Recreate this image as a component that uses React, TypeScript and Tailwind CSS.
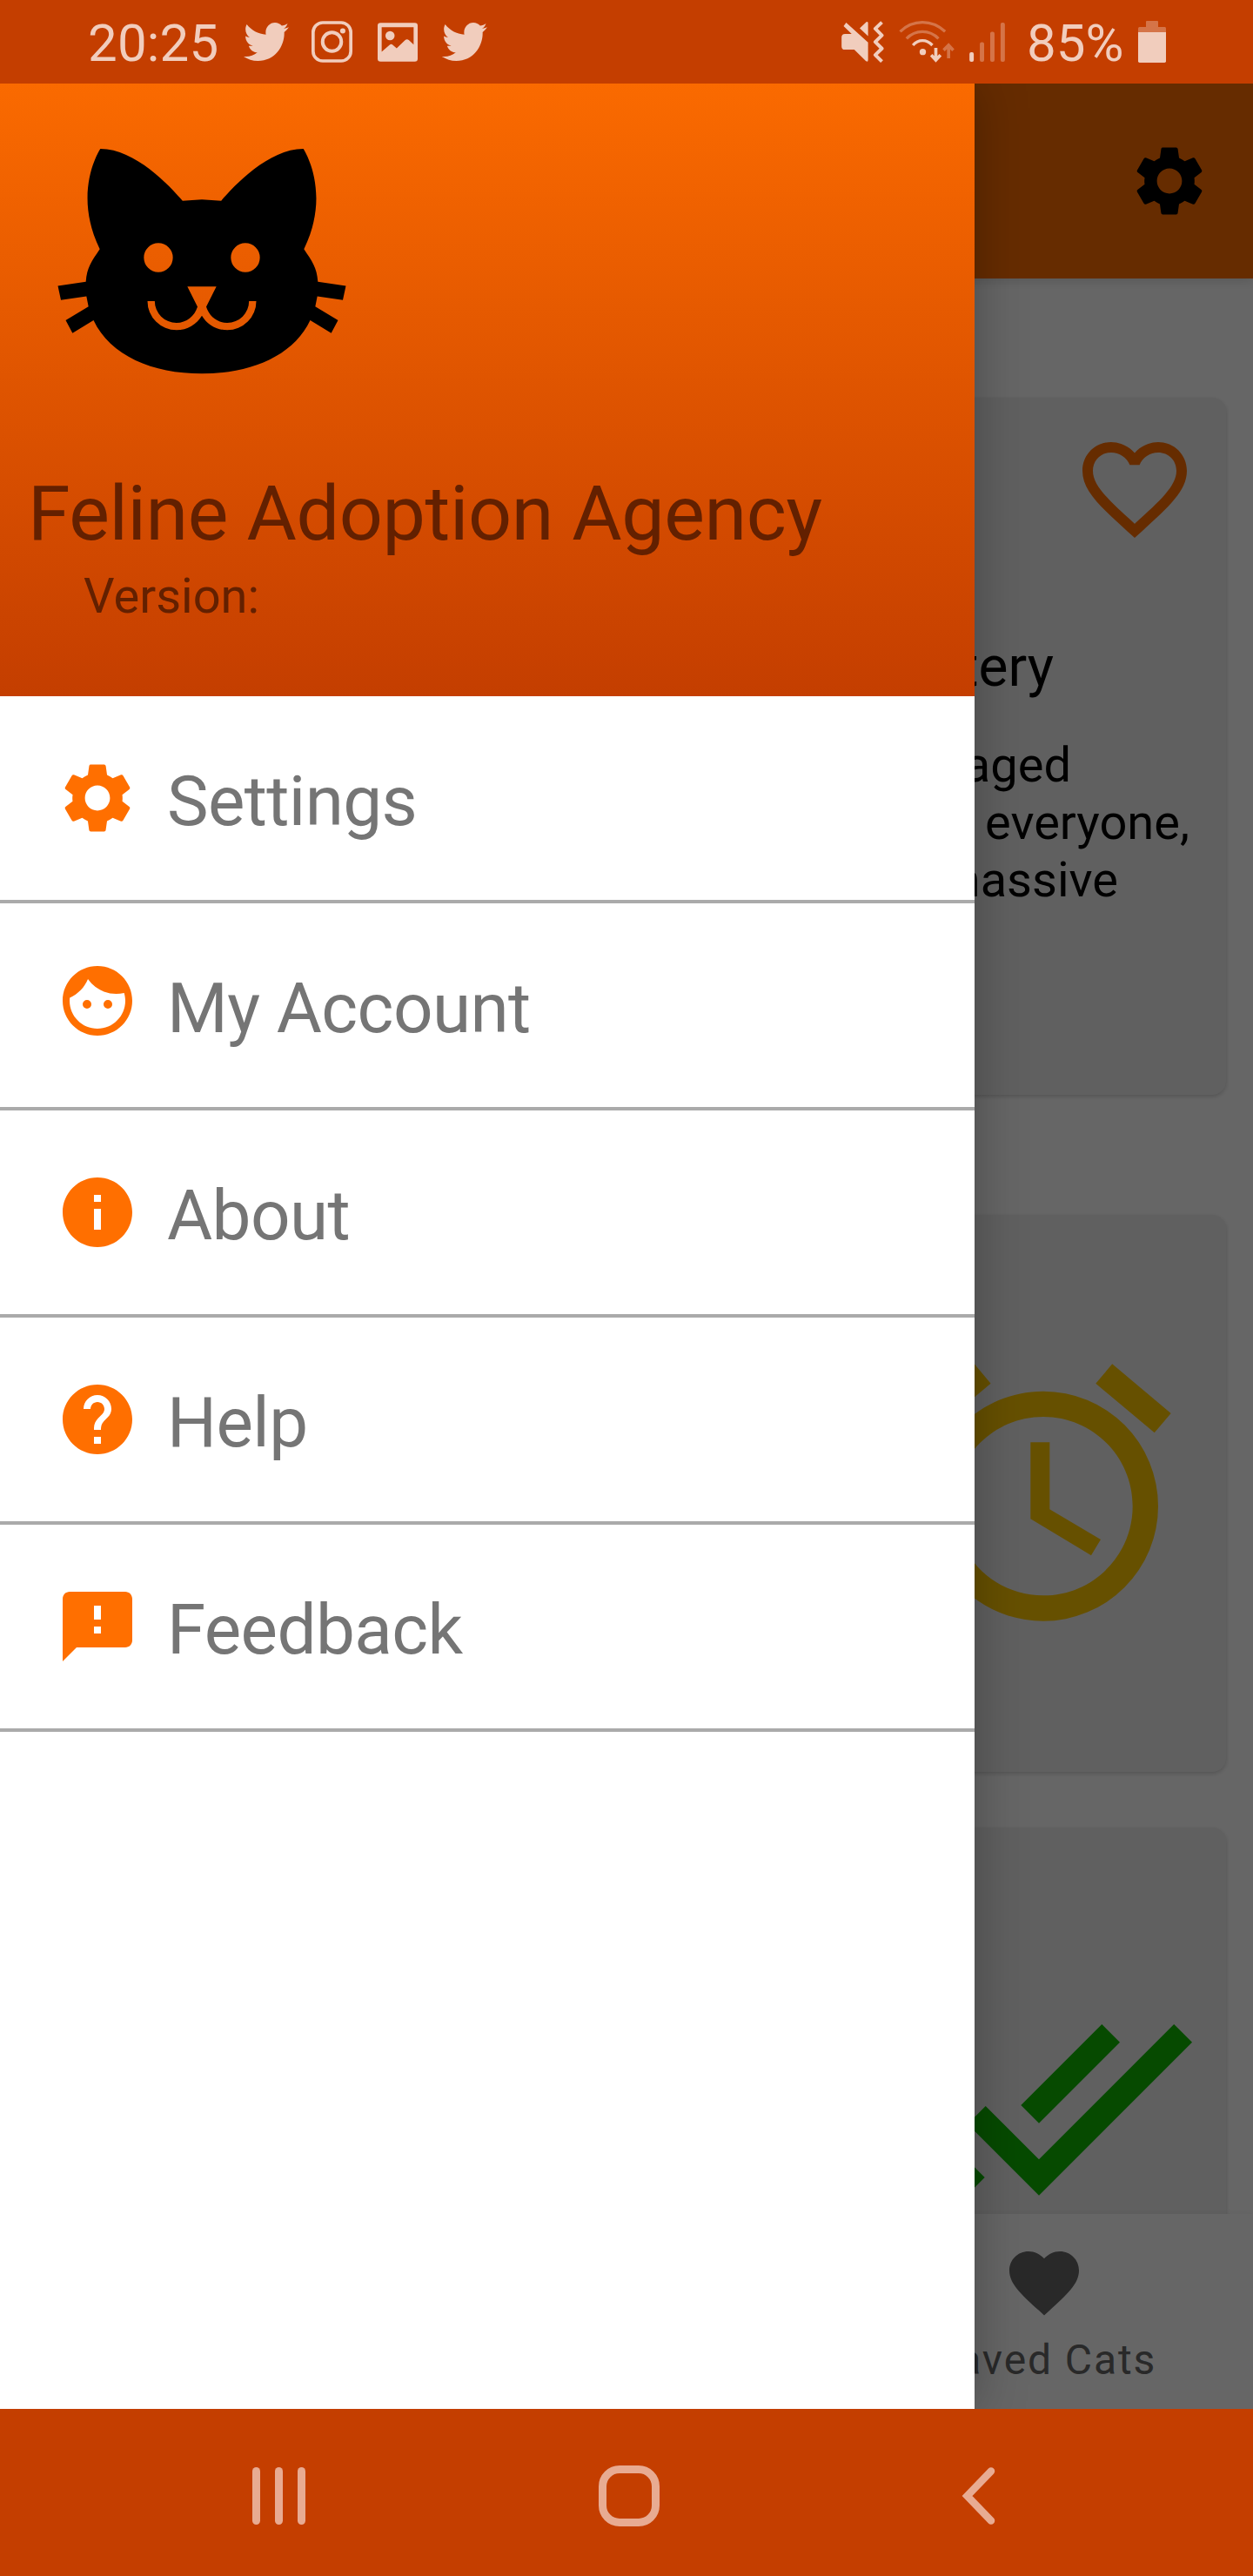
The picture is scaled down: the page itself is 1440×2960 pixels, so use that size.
import type { ReactNode } from "react";
import {
  MdAlarm,
  MdDoneAll,
  MdFace,
  MdFavorite,
  MdFavoriteBorder,
  MdFeedback,
  MdHelp,
  MdInfo,
  MdSettings,
} from "react-icons/md";
import { FaTwitter } from "react-icons/fa";

const CAT =
  "M12,8L10.67,8.09C9.81,7.07 7.4,4.5 5,4.5C5,4.5 3.03,7.46 4.96,11.41C4.41,12.24 4.07,12.67 4,13.66L2.07,13.95L2.28,14.93L4.04,14.67L4.18,15.38L2.61,16.32L3.08,17.21L4.53,16.32C5.68,18.76 8.59,20 12,20C15.41,20 18.32,18.76 19.47,16.32L20.92,17.21L21.39,16.32L19.82,15.38L19.96,14.67L21.72,14.93L21.93,13.95L20,13.66C19.93,12.67 19.59,12.24 19.04,11.41C20.97,7.46 19,4.5 19,4.5C16.6,4.5 14.19,7.07 13.33,8.09L12,8M9,11A1,1 0 0,1 10,12A1,1 0 0,1 9,13A1,1 0 0,1 8,12A1,1 0 0,1 9,11M15,11A1,1 0 0,1 16,12A1,1 0 0,1 15,13A1,1 0 0,1 14,12A1,1 0 0,1 15,11M11,14H13L12.3,15.39C12.5,16.03 13.06,16.5 13.75,16.5A1.5,1.5 0 0,0 15.25,15H15.75A2,2 0 0,1 13.75,17C13,17 12.35,16.59 12,16V16H12C11.65,16.59 11,17 10.25,17A2,2 0 0,1 8.25,15H8.75A1.5,1.5 0 0,0 10.25,16.5C10.94,16.5 11.5,16.03 11.7,15.39L11,14Z";

function Twitter() {
  return <FaTwitter preserveAspectRatio="none" className="h-[54px] w-[52px] shrink-0" />;
}

function Instagram() {
  return (
    <svg viewBox="0 0 140 142" className="ml-[26px] h-[48px] w-[47px] shrink-0" fill="none" stroke="currentColor">
      <rect x="5.5" y="5.5" width="129" height="131" rx="33" strokeWidth="11" />
      <circle cx="70" cy="71" r="32" strokeWidth="12" />
      <circle cx="107" cy="34" r="9" fill="currentColor" stroke="none" />
    </svg>
  );
}

function Picture() {
  return (
    <svg viewBox="0 0 139 135" className="mr-[28px] ml-[29px] h-[45px] w-[46px] shrink-0" fill="currentColor">
      <path
        fillRule="evenodd"
        d="M10 0H129Q139 0 139 10V125Q139 135 129 135H10Q0 135 0 125V10Q0 0 10 0ZM14 15V101L41 77Q47 72 53 77L66 89L95 61Q102 55 109 61L125 76V15Z"
      />
      <circle cx="43" cy="45" r="16" />
    </svg>
  );
}

function Mute() {
  return (
    <svg viewBox="0 0 147 145" className="h-[48px] w-[49px] shrink-0" fill="currentColor">
      <path d="M16 6L92 75V135Q92 145 84 139L44 100H12Q0 100 0 88V57Q0 45 12 45H35L7 18Z" />
      <path d="M63 26L86 4Q92 0 92 8V53Z" />
      <path d="M141 5L118 27L141 50L118 73L141 96L118 118L141 141" transform="translate(-1 0)" fill="none" stroke="currentColor" strokeWidth="12" strokeLinejoin="round" />
    </svg>
  );
}

function Wifi() {
  return (
    <svg viewBox="0 0 191 144" className="ml-[17px] h-[48px] w-[64px] shrink-0" fill="none" stroke="currentColor">
      <g strokeWidth="10">
        <path d="M4 37Q37 5 81 5T159 37" opacity=".38" />
        <path d="M26 61Q49 37 81 37T136 61" opacity=".38" />
        <path d="M48 84Q62 68 81 68T115 84" />
      </g>
      <circle cx="82" cy="107" r="11" fill="currentColor" stroke="none" />
      <path d="M127 93V136M111 118L127 135L143 118" strokeWidth="11" />
      <path d="M171 129V85M154 101L171 84L187 101" strokeWidth="11" opacity=".38" />
    </svg>
  );
}

function Signal() {
  return (
    <svg viewBox="0 0 123 136" className="ml-[17px] h-[45px] w-[41px] shrink-0" fill="currentColor">
      <rect x="0" y="103" width="15" height="33" rx="6" />
      <rect x="36" y="68" width="15" height="68" rx="6" opacity=".38" />
      <rect x="72" y="32" width="15" height="104" rx="6" opacity=".38" />
      <rect x="108" y="0" width="15" height="136" rx="6" opacity=".38" />
    </svg>
  );
}

function Battery() {
  return (
    <svg viewBox="0 0 96 144" className="ml-[17px] h-[48px] w-[32px] shrink-0" fill="currentColor">
      <path d="M27 3Q27 0 30 0H66Q69 0 69 3V21H92Q96 21 96 26V39H0V26Q0 21 5 21H27Z" opacity=".38" />
      <path d="M0 39H96V139Q96 144 91 144H5Q0 144 0 139Z" />
    </svg>
  );
}

function StatusBar() {
  return (
    <header className="flex h-24 shrink-0 items-center bg-[#c43e00] pr-[100px] pl-[101px] text-[#f1cdbd]">
      <span className="mt-[3px] w-[179px] text-[60px] leading-[70px] tracking-[0.2px]">20:25</span>
      <Twitter />
      <Instagram />
      <Picture />
      <Twitter />
      <div className="ml-auto flex items-center">
        <Mute />
        <Wifi />
        <Signal />
        <span className="mt-[3px] ml-[25px] w-[111px] text-[60px] leading-[70px]">85%</span>
        <Battery />
      </div>
    </header>
  );
}

function MenuRow({ icon, label }: { icon: ReactNode; label: string }) {
  return (
    <li className="flex h-[238px] items-center border-b-4 border-[#aaaaaa] pl-16">
      {icon}
      <span className="mt-2 ml-8 text-[80px] leading-[94px] tracking-[-0.6px] text-[#757575]">{label}</span>
    </li>
  );
}

function Drawer() {
  return (
    <aside className="absolute inset-y-0 left-0 w-[1120px] bg-white shadow-[0_0_56px_rgba(0,0,0,0.28)]">
      <div className="flex h-[704px] flex-col bg-linear-to-b from-[#fa6a00] to-[#c43e00] pl-8 text-[#632000]">
        <svg viewBox="0 0 24 24" className="size-[400px] shrink-0 text-black" fill="currentColor">
          <path d={CAT} />
        </svg>
        <h1 className="mt-[42px] text-[88px] leading-[104px] tracking-[-0.4px] whitespace-nowrap">Feline Adoption Agency</h1>
        <p className="mt-[10px] ml-16 text-[56px] leading-[66px]">Version:</p>
      </div>
      <ul className="text-[#ff6f00]">
        <MenuRow icon={<MdSettings className="size-24" />} label="Settings" />
        <MenuRow icon={<MdFace className="mb-[10px] size-24" />} label="My Account" />
        <MenuRow icon={<MdInfo className="size-24" />} label="About" />
        <MenuRow icon={<MdHelp className="size-24" />} label="Help" />
        <MenuRow icon={<MdFeedback className="size-24" />} label="Feedback" />
      </ul>
    </aside>
  );
}

function Page() {
  return (
    <main className="flex h-full flex-col bg-white">
      <div className="z-10 flex h-56 shrink-0 items-center justify-end bg-[#ff6f00] pr-12 shadow-[0_2px_12px_rgba(0,0,0,0.16)]">
        <MdSettings className="size-24 text-black" />
      </div>
      <div className="flex min-h-0 flex-1 flex-col overflow-hidden pr-[31px] pl-8 pt-[137px]">
        <article className="flex h-[801px] shrink-0 flex-col items-end rounded-2xl bg-[#f0f0f0] pt-[33px] text-black shadow-[0_2px_5px_rgba(0,0,0,0.18)]">
          <MdFavoriteBorder className="mr-[33px] size-36 text-[#ff6f00]" />
          <h2 className="mt-[95px] mr-[198px] text-[64px] leading-[76px]">Cattery</h2>
          <p className="mt-[41px] mr-[178px] text-[56px] leading-[66px]">aged</p>
          <p className="mr-[42px] text-[56px] leading-[66px]">everyone,</p>
          <p className="mr-[124px] text-[56px] leading-[66px]">massive</p>
        </article>
        <article className="mt-[138px] flex h-[640px] shrink-0 justify-end rounded-2xl bg-[#f0f0f0] pt-36 pr-[34px] shadow-[0_2px_5px_rgba(0,0,0,0.18)]">
          <MdAlarm className="size-[352px] text-[#ffc800]" />
        </article>
        <article className="mt-[64px] flex h-[640px] shrink-0 justify-end rounded-2xl bg-[#f0f0f0] pt-[144px] pr-[34px] shadow-[0_2px_5px_rgba(0,0,0,0.18)]">
          <MdDoneAll className="size-[352px] text-[#0fba00]" />
        </article>
      </div>
      <nav className="z-10 flex h-56 shrink-0 justify-end bg-white text-[#666666] shadow-[0_0_8px_rgba(0,0,0,0.06)]">
        <div className="flex w-[480px] flex-col items-center pt-[31px]">
          <MdFavorite className="size-24" />
          <span className="mt-[13px] text-[48px] leading-[56px] tracking-[1.9px]">Saved Cats</span>
        </div>
      </nav>
    </main>
  );
}

function SystemNav() {
  return (
    <footer className="flex h-48 shrink-0 items-center bg-[#c43e00] pt-2 pl-[290px] text-[#e8ab92]">
      <div className="flex gap-[17px]">
        <i className="h-[66px] w-[9px] rounded-full bg-current" />
        <i className="h-[66px] w-[9px] rounded-full bg-current" />
        <i className="h-[66px] w-[9px] rounded-full bg-current" />
      </div>
      <div className="ml-[337px] size-[70px] rounded-[24px] border-9 border-current" />
      <svg viewBox="0 0 40 68" className="ml-[346px] h-[68px] w-[40px]" fill="none" stroke="currentColor" strokeWidth="8.5" strokeLinecap="round" strokeLinejoin="miter">
        <path d="M35 5.500L7.500 34L35 62.500" />
      </svg>
    </footer>
  );
}

export default function App() {
  return (
    <div className="flex h-[2960px] w-[1440px] flex-col overflow-hidden font-[Roboto,sans-serif]">
      <StatusBar />
      <div className="relative h-[2672px] shrink-0 overflow-hidden">
        <Page />
        <div className="absolute inset-0 z-20 bg-black/60">
          <Drawer />
        </div>
      </div>
      <SystemNav />
    </div>
  );
}
